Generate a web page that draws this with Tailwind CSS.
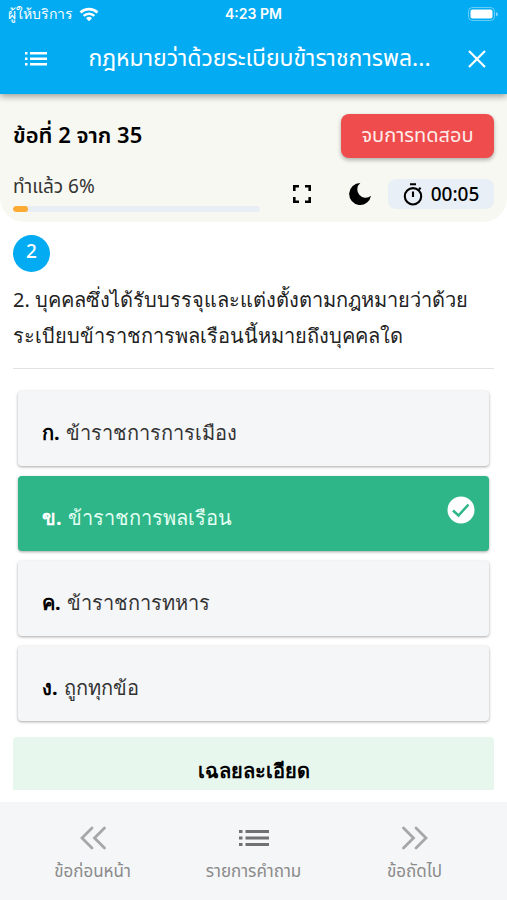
<!DOCTYPE html>
<html lang="th">
<head>
<meta charset="utf-8">
<meta name="viewport" content="width=device-width, initial-scale=1">
<title>แบบทดสอบ</title>
<script src="https://cdn.jsdelivr.net/npm/@tailwindcss/browser@4"></script>
</head>
<body class="flex h-screen flex-col overflow-hidden bg-white font-['Noto_Sans_Thai','Noto_Sans',sans-serif] text-black">
<header class="relative z-10 shrink-0 bg-[#02abf2] text-white shadow-[0_2px_7px_rgba(0,0,0,0.4)]">
  <div class="grid h-7 grid-cols-3 items-center px-2">
    <div class="flex items-center gap-1.5 font-['Liberation_Sans',sans-serif] text-sm">
      <span>ผู้ให้บริการ</span>
      <svg class="w-5" viewBox="0 0 20 15" fill="none" stroke="currentColor" stroke-width="2.6" aria-hidden="true"><path d="M1.5 5.5a12.3 12.3 0 0 1 17 0M4.7 8.9a7.6 7.6 0 0 1 10.6 0"/><path d="M10 14.2l-3-3a4.300 4.300 0 0 1 6 0z" fill="currentColor" stroke="none"/></svg>
    </div>
    <time class="text-center font-[Inter,sans-serif] text-sm font-semibold">4:23 PM</time>
    <svg class="w-8 justify-self-end" viewBox="0 0 32 16" aria-hidden="true"><rect x="1.500" y="1.500" width="26" height="13" rx="4" fill="none" stroke="#fff" stroke-opacity=".4"/><rect x="3.500" y="3.500" width="22" height="9" rx="2" fill="#fff"/><path d="M29 6v4.500q2-.8 2-2.200T29 6z" fill="#fff" fill-opacity=".5"/></svg>
  </div>
  <div class="flex h-[66px] items-center justify-between px-4 pb-1">
    <button aria-label="เมนู" class="flex w-10 justify-center"><svg class="w-6" viewBox="0 0 24 14" fill="currentColor" aria-hidden="true"><path d="M1 0h2.500v2.500H1zM1 5.500h2.500V8H1zM1 11h2.500v2.500H1zM6 0h17v2.500H6zM6 5.500h17V8H6zM6 11h17v2.500H6z"/></svg></button>
    <h1 class="min-w-0 flex-1 text-center text-[23px] leading-10 whitespace-nowrap">กฎหมายว่าด้วยระเบียบข้าราชการพล...</h1>
    <button aria-label="ปิด" class="flex w-7 justify-center"><svg class="w-5" viewBox="0 0 20 20" fill="none" stroke="currentColor" stroke-width="2.200" aria-hidden="true"><path d="M2 2l16 16M18 2L2 18"/></svg></button>
  </div>
</header>
<section class="shrink-0 rounded-b-3xl bg-[#f8f8f2] px-[13px] pt-5 pb-2">
  <div class="flex items-center justify-between">
    <h2 class="text-[22px] font-semibold">ข้อที่ 2 จาก 35</h2>
    <button class="h-11 w-[153px] rounded-lg bg-[#ef4c4d] text-xl text-[#ffecea] shadow-[0_2px_4px_rgba(0,0,0,0.3)]">จบการทดสอบ</button>
  </div>
  <div class="mt-4 flex h-10 items-center">
    <div class="min-w-0 flex-1">
      <label for="done" class="block text-[19px] leading-6 text-[#333]">ทำแล้ว 6%</label>
      <progress id="done" value="6" max="100" class="mt-1.5 block h-1.5 w-full appearance-none overflow-hidden rounded-full bg-[#e8eff4] [&::-webkit-progress-bar]:bg-[#e8eef4] [&::-webkit-progress-value]:rounded-full [&::-webkit-progress-value]:bg-[#fbaa33]"></progress>
    </div>
    <button aria-label="เต็มจอ" class="ml-8"><svg class="w-5" viewBox="0 0 20 20" fill="none" stroke="currentColor" stroke-width="2.600" aria-hidden="true"><path d="M2.300 7V2.300H7M13 2.300h4.700V7M17.700 13v4.700H13M7 17.700H2.300V13"/></svg></button>
    <button aria-label="โหมดกลางคืน" class="ml-9"><svg class="w-6" viewBox="0 0 24 24" fill="currentColor" aria-hidden="true"><path d="M12.300 1A11 11 0 1 0 23 13.800 7.700 7.700 0 0 1 12.300 1z"/></svg></button>
    <div class="ml-4 flex h-[30px] w-[106px] items-center justify-center gap-2 rounded-lg bg-[#e9eff6]">
      <svg class="w-5" viewBox="0 0 20 23" fill="none" stroke="currentColor" stroke-width="2.100" aria-hidden="true"><circle cx="10" cy="13.300" r="8.200"/><path d="M7 1.300h6M10 8.500v5.500M16 6.500l1.600-1.700"/></svg>
      <time class="pt-1 text-[19px] leading-6 font-medium">00:05</time>
    </div>
  </div>
</section>
<main class="min-h-0 flex-1 overflow-hidden px-[13px] pt-[13px]">
  <div class="flex size-[37px] items-center justify-center rounded-full bg-[#02abf2] text-[19px] font-medium text-white">2</div>
  <p class="mt-2.5 border-b border-[#e2e2e2] pb-3.5 font-['Liberation_Sans','Noto_Sans',sans-serif] text-xl leading-9 text-[#222]"><span class="font-['Noto_Sans']">2.</span> บุคคลซึ่งได้รับบรรจุและแต่งตั้งตามกฎหมายว่าด้วย<br>ระเบียบข้าราชการพลเรือนนี้หมายถึงบุคคลใด</p>
  <div class="mx-[5px] mt-[22px] flex flex-col gap-2.5 font-['Noto_Sans',sans-serif] text-xl text-[#333]">
    <button class="flex h-[75px] items-center gap-1.5 rounded bg-[#f5f6f8] px-6 pt-2 shadow-[0_1px_3px_rgba(0,0,0,0.35)]"><b class="text-black">ก.</b><span>ข้าราชการการเมือง</span></button>
    <button class="flex h-[75px] items-center gap-1.5 rounded bg-[#2eb688] px-6 pt-2 text-[#e3fff3] shadow-[0_1px_3px_rgba(0,0,0,0.35)]"><b class="text-white">ข.</b><span>ข้าราชการพลเรือน</span><svg class="-mr-2.5 mb-4 ml-auto w-7" viewBox="0 0 28 28" aria-hidden="true"><circle cx="14" cy="14" r="13.500" fill="#fff"/><path d="M6 14.500l5.500 5L21.500 8.500" fill="none" stroke="#2eb688" stroke-width="2.500"/></svg></button>
    <button class="flex h-[75px] items-center gap-1.5 rounded bg-[#f5f6f8] px-6 pt-2 shadow-[0_1px_3px_rgba(0,0,0,0.35)]"><b class="text-black">ค.</b><span>ข้าราชการทหาร</span></button>
    <button class="flex h-[75px] items-center gap-1.5 rounded bg-[#f5f6f8] px-6 pt-2 shadow-[0_1px_3px_rgba(0,0,0,0.35)]"><b class="text-black">ง.</b><span>ถูกทุกข้อ</span></button>
  </div>
  <h3 class="mt-4 rounded-t bg-[#e7f7ee] pt-4 pb-px text-center font-['Noto_Sans',sans-serif] text-xl leading-9 font-bold">เฉลยละเอียด</h3>
</main>
<nav class="flex h-[98px] shrink-0 justify-around bg-[#f5f6f8] px-3 pt-6 text-[17px] text-[#8b8b8b]">
  <button class="flex w-28 flex-col items-center gap-2.5"><svg class="h-6 w-7" viewBox="0 0 28 24" fill="none" stroke="#a7a7a7" stroke-width="2.800" stroke-linecap="round" aria-hidden="true"><path d="M13 2L3 12l10 10M25.500 2l-10 10 10 10"/></svg><span>ข้อก่อนหน้า</span></button>
  <button class="flex w-28 flex-col items-center gap-2.5"><svg class="h-6 w-[30px]" viewBox="0 0 30 24" fill="#717171" aria-hidden="true"><path d="M0 4h3.500v3H0zM0 10.500h3.500v3H0zM0 17h3.500v3H0zM6.500 4H30v3H6.500zM6.500 10.500H30v3H6.500zM6.500 17H30v3H6.500z"/></svg><span>รายการคำถาม</span></button>
  <button class="flex w-28 flex-col items-center gap-2.5"><svg class="h-6 w-7" viewBox="0 0 28 24" fill="none" stroke="#a7a7a7" stroke-width="2.800" stroke-linecap="round" aria-hidden="true"><path d="M2.500 2l10 10-10 10M15 2l10 10-10 10"/></svg><span>ข้อถัดไป</span></button>
</nav>
</body>
</html>
